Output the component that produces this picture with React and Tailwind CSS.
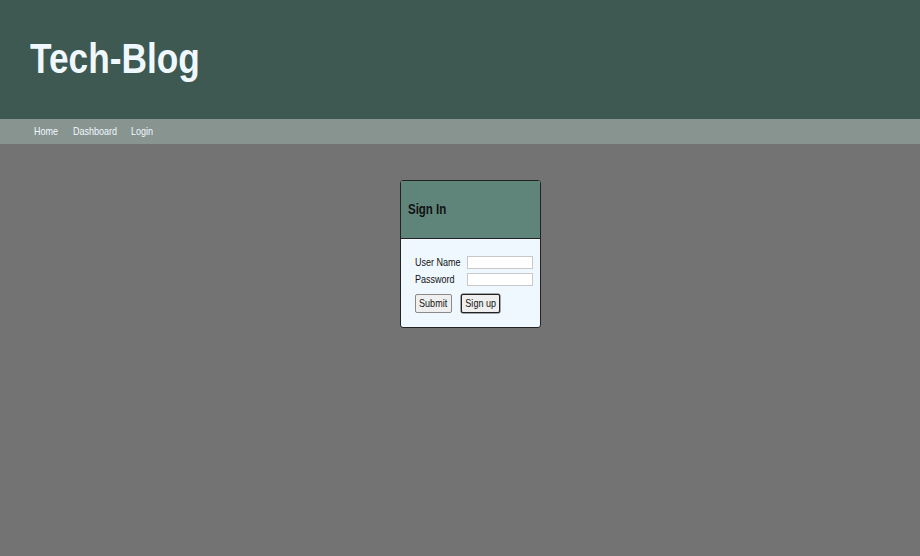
const font = { fontFamily: '"Liberation Sans", Arial, sans-serif' };

// the reference's lettering is narrower than Arial; squeeze it horizontally
const Narrow = ({ children, center = false }) => (
  <span
    className={`inline-block scale-x-[0.82] whitespace-nowrap ${center ? "origin-center" : "origin-left"}`}
  >
    {children}
  </span>
);

export default function App() {
  return (
    <div className="min-h-[556px] bg-[#737373]" style={font}>
      <header className="h-[119px] bg-[#3e5952] pl-[30px] pt-[34px]">
        <h1 className="text-[43px] font-bold leading-[48px] text-[#f0f8ff]">
          <Narrow>Tech-Blog</Narrow>
        </h1>
      </header>
      <nav className="flex h-[25px] items-center bg-[#879490] pl-[34px] text-[11px] text-[#f0f8ff]">
        <a href="#" className="w-[39px]"><Narrow>Home</Narrow></a>
        <a href="#" className="w-[58px]"><Narrow>Dashboard</Narrow></a>
        <a href="#" className="w-[40px]"><Narrow>Login</Narrow></a>
      </nav>
      <main className="flex justify-center pl-[21px] pt-[36px]">
        <div className="w-[141px] overflow-hidden rounded-[3px] border border-[#222] bg-[#f0f8ff]">
          <div className="flex h-[58px] items-center border-b border-[#222] bg-[#5f857a] pl-[7px]">
            <h2 className="text-[14px] font-bold text-[#111]"><Narrow>Sign In</Narrow></h2>
          </div>
          <form className="px-[14px] pb-[14px] pt-[17px] text-[11px] text-[#111]">
            <div className="flex h-[13px] items-center">
              <label className="w-[52px] shrink-0"><Narrow>User Name</Narrow></label>
              <input className="h-[13px] w-[66px] shrink-0 border border-[#c8c8c8] bg-white" />
            </div>
            <div className="mt-[4px] flex h-[13px] items-center">
              <label className="w-[52px] shrink-0"><Narrow>Password</Narrow></label>
              <input type="password" className="h-[13px] w-[66px] shrink-0 border border-[#c8c8c8] bg-white" />
            </div>
            <div className="mt-[8px] flex gap-[9px]">
              <button type="button" className="flex h-[19px] w-[37px] items-center justify-center rounded-[2px] border border-[#8a8a8a] bg-[#efefef]">
                <Narrow center>Submit</Narrow>
              </button>
              <button type="button" className="flex h-[19px] w-[39px] items-center justify-center rounded-[2px] border border-[#222] bg-[#efefef] shadow-[0_0_0_0.5px_#555]">
                <Narrow center>Sign up</Narrow>
              </button>
            </div>
          </form>
        </div>
      </main>
    </div>
  );
}
